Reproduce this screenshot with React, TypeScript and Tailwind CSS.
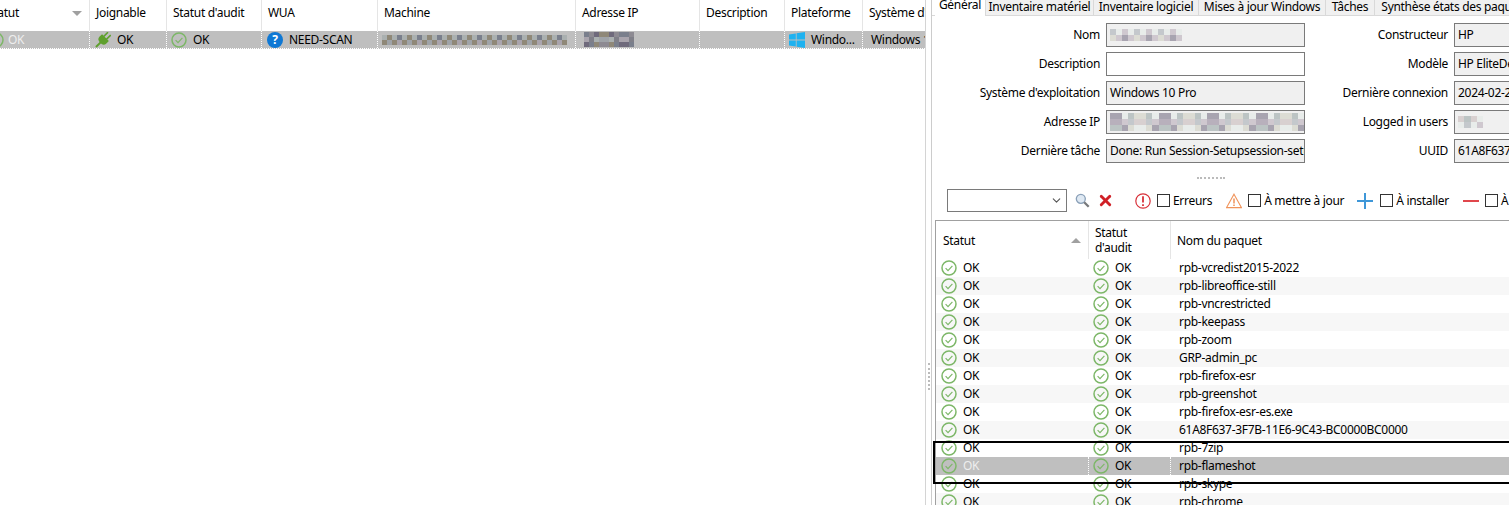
import type { ReactNode } from 'react';
import { X, ChevronDown } from 'lucide-react';

// blurred-out values, drawn as pixelated tinted blocks
const tints = ['#a9a4ad', '#8d8a92', '#aab0b0', '#7a7f8c', '#9fa3a8', '#6f6a7c', '#7f7f88', '#8f8878'];
const lightTints = ['#cfc8cf', '#dcdcd4', '#b8b0bc', '#e8ecea', '#c4c8cc', '#a8a4b0', '#d8d0d0', '#bcc4c4'];

function Blur({ width, rows = 2, cell = 5, seed = 1, light = false }: { width: number; rows?: number; cell?: number; seed?: number; light?: boolean }) {
  const n = Math.floor(width / cell);
  const colours = light ? lightTints : tints;
  return (
    <div className="flex flex-col shrink-0" style={{ width }}>
      {Array.from({ length: rows }).map((_, r) => (
        <div key={r} className="flex" style={{ height: cell }}>
          {Array.from({ length: n }).map((_, i) => (
            <div
              key={i}
              className="flex-1"
              style={{ background: colours[(i * i * 3 + i * seed + seed + r * 5) % colours.length] }}
            />
          ))}
        </div>
      ))}
    </div>
  );
}

function CheckIcon({ className = '' }: { className?: string }) {
  return (
    <svg viewBox="0 0 16 16" className={`w-4 h-4 shrink-0 ${className}`} fill="none" stroke="#7db768" strokeWidth="1.5">
      <circle cx="8" cy="8" r="7" />
      <path d="M4.6 8.2 7 10.6 11.4 5.8" strokeWidth="1.2" />
    </svg>
  );
}

function PlugIcon() {
  return (
    <svg viewBox="0 0 16 16" className="w-4 h-4 shrink-0" fill="#5fa02e">
      <g transform="rotate(45 8 8)">
        <rect x="5.2" y="-1" width="1.7" height="6" />
        <rect x="9.1" y="-1" width="1.7" height="6" />
        <path d="M3.2 4.5H12.8V8Q12.8 12 8 12Q3.2 12 3.2 8z" />
        <rect x="7" y="11" width="2" height="7" />
      </g>
    </svg>
  );
}

function HelpIcon() {
  return <div className="w-4 h-4 rounded-full bg-[#0f78d4] text-white text-[12px] font-bold leading-4 text-center shrink-0">?</div>;
}

function WinIcon() {
  return (
    <svg viewBox="0 0 16 16" className="w-4 h-4 shrink-0" fill="#1fb2f0">
      <path d="M0 2.6 6.8 1.4V7.6H0zM7.6 1.3 16 0V7.6H7.6zM0 8.4H6.8V14.6L0 13.4zM7.6 8.4H16V16L7.6 14.7z" />
    </svg>
  );
}

function ErrorIcon() {
  return (
    <svg viewBox="0 0 16 16" className="w-4 h-4 shrink-0" fill="none" stroke="#d8313a" strokeWidth="1.2">
      <circle cx="8" cy="8" r="7.2" />
      <path d="M8 3.2V9.6M8 11.2V13" strokeWidth="1.8" />
    </svg>
  );
}

function WarnIcon() {
  return (
    <svg viewBox="0 0 16 16" className="w-4 h-4 shrink-0" fill="none" stroke="#f0935a" strokeWidth="1.1">
      <path d="M8 1.2 15.4 14.6H0.6z" />
      <path d="M8 5.5V10.6M8 11.6V13" strokeWidth="1.5" />
    </svg>
  );
}

function LensIcon() {
  return (
    <svg viewBox="0 0 16 16" className="w-[15px] h-[15px] shrink-0" fill="#dfe9f3" stroke="#8aa0b8" strokeWidth="1.4">
      <circle cx="6.2" cy="6.2" r="4.8" />
      <path d="M9.8 9.8 14.6 14.6" stroke="#77797c" strokeWidth="2.4" />
    </svg>
  );
}

function PlusIcon() {
  return (
    <svg viewBox="0 0 16 16" className="w-4 h-4 shrink-0" stroke="#3f97d8" strokeWidth="2">
      <path d="M0 8H16M8 0V16" />
    </svg>
  );
}

function MinusIcon() {
  return (
    <svg viewBox="0 0 16 16" className="w-4 h-4 shrink-0" stroke="#e0474c" strokeWidth="2">
      <path d="M0 8H16" />
    </svg>
  );
}

const leftCols = [
  { label: 'Statut', w: 90 },
  { label: 'Joignable', w: 77 },
  { label: "Statut d'audit", w: 95 },
  { label: 'WUA', w: 116 },
  { label: 'Machine', w: 198 },
  { label: 'Adresse IP', w: 124 },
  { label: 'Description', w: 85 },
  { label: 'Plateforme', w: 78 },
  { label: "Système d'", w: 63 },
];

function Cell({ w, pl = 0, children }: { w: number; pl?: number; children?: ReactNode }) {
  return (
    <div
      className="flex items-center shrink-0 overflow-hidden whitespace-nowrap border-r border-dotted border-white"
      style={{ width: w, paddingLeft: pl }}
    >
      {children}
    </div>
  );
}

function LeftPane() {
  return (
    <div className="w-[926px] shrink-0 overflow-hidden border-r border-[#d4d4d4]">
      <div className="flex h-[31px]">
        {leftCols.map((c, i) => (
          <div
            key={c.label}
            className={`relative flex items-center h-full pb-[6px] border-r border-[#e5e5e5] shrink-0 overflow-hidden whitespace-nowrap ${i === 0 ? '' : 'pl-[6px]'}`}
            style={{ width: c.w }}
          >
            <span className={i === 0 ? '-ml-[13px]' : ''}>{c.label}</span>
            {i === 0 && <div className="absolute left-[72px] top-[11px] w-0 h-0 border-x-[5px] border-x-transparent border-t-[5px] border-t-[#a0a0a0]" />}
          </div>
        ))}
      </div>
      <div className="flex h-[18px] bg-[#bfbfbf] border-b border-dotted border-white">
        <Cell w={90}>
          <CheckIcon className="-ml-[12px]" />
          <span className="ml-[4px] text-[#eeeeee]">OK</span>
        </Cell>
        <Cell w={77} pl={5}>
          <PlugIcon />
          <span className="ml-[6px]">OK</span>
        </Cell>
        <Cell w={95} pl={4}>
          <CheckIcon />
          <span className="ml-[6px]">OK</span>
        </Cell>
        <Cell w={116} pl={5}>
          <HelpIcon />
          <span className="ml-[6px]">NEED-SCAN</span>
        </Cell>
        <Cell w={198} pl={4}>
          <Blur width={185} rows={2} cell={5} seed={2} />
        </Cell>
        <Cell w={124} pl={8}>
          <Blur width={50} rows={3} cell={5} seed={3} />
        </Cell>
        <Cell w={85} />
        <Cell w={78} pl={4}>
          <WinIcon />
          <span className="ml-[6px]">Windo...</span>
        </Cell>
        <Cell w={63} pl={8}>Windows 1</Cell>
      </div>
    </div>
  );
}

const tabs = [
  { label: 'Inventaire matériel', w: 108 },
  { label: 'Inventaire logiciel', w: 105 },
  { label: 'Mises à jour Windows', w: 127 },
  { label: 'Tâches', w: 49 },
  { label: 'Synthèse états des paquets', w: 160 },
];

function Tabs() {
  return (
    <div className="flex h-[16px] shrink-0 pl-[3px] border-b border-[#d9d9d9]">
      <div className="w-[51px] h-[16px] bg-white text-center leading-[9px] border-r border-[#d9d9d9] shrink-0">Général</div>
      {tabs.map((t) => (
        <div
          key={t.label}
          className="h-[15px] bg-[#f0f0f0] border-r border-[#d9d9d9] text-center leading-[13px] whitespace-nowrap shrink-0"
          style={{ width: t.w }}
        >
          {t.label}
        </div>
      ))}
    </div>
  );
}

function Field({ label, labelW, inputW, white, children }: { label: string; labelW: number; inputW: number; white?: boolean; children?: ReactNode }) {
  return (
    <div className="flex items-center h-6">
      <div className="text-right whitespace-nowrap shrink-0" style={{ width: labelW }}>{label}</div>
      <div
        className={`ml-[6px] h-6 border border-[#7a7a7a] flex items-center pl-[3px] overflow-hidden whitespace-nowrap shrink-0 ${white ? 'bg-white' : 'bg-[#f0f0f0]'}`}
        style={{ width: inputW }}
      >
        {children}
      </div>
    </div>
  );
}

function Form() {
  return (
    <div className="flex pt-[7px] shrink-0">
      <div className="flex flex-col gap-[5px] w-[374px] shrink-0">
        <Field label="Nom" labelW={168} inputW={199}>
          <Blur width={72} rows={2} cell={6} seed={4} light />
        </Field>
        <Field label="Description" labelW={168} inputW={199} white />
        <Field label="Système d'exploitation" labelW={168} inputW={199}>Windows 10 Pro</Field>
        <Field label="Adresse IP" labelW={168} inputW={199}>
          <Blur width={194} rows={3} cell={6} seed={5} light />
        </Field>
        <Field label="Dernière tâche" labelW={168} inputW={199}>Done: Run Session-Setupsession-setup</Field>
      </div>
      <div className="flex flex-col gap-[5px] shrink-0">
        <Field label="Constructeur" labelW={142} inputW={120}>HP</Field>
        <Field label="Modèle" labelW={142} inputW={120}>HP EliteDesk</Field>
        <Field label="Dernière connexion" labelW={142} inputW={120}>2024-02-21</Field>
        <Field label="Logged in users" labelW={142} inputW={120}>
          <Blur width={25} rows={2} cell={6} seed={6} light />
        </Field>
        <Field label="UUID" labelW={142} inputW={120}>61A8F637-3F7B</Field>
      </div>
    </div>
  );
}

function Check({ label }: { label: string }) {
  return (
    <div className="flex items-center gap-[3px] whitespace-nowrap shrink-0">
      <div className="w-[13px] h-[13px] bg-white border border-[#333333] shrink-0" />
      <span>{label}</span>
    </div>
  );
}

function Toolbar() {
  return (
    <div className="flex items-center h-[23px] mt-[10px] pl-[15px] shrink-0">
      <div className="w-[120px] h-[23px] border border-[#7a7a7a] flex items-center justify-end pr-[3px] shrink-0">
        <ChevronDown className="w-[13px] h-[13px] text-[#555555]" />
      </div>
      <div className="ml-[8px] shrink-0"><LensIcon /></div>
      <X className="w-[17px] h-[17px] ml-[7px] text-[#d01f26] shrink-0" strokeWidth={4} />
      <div className="ml-[21px] shrink-0"><ErrorIcon /></div>
      <div className="ml-[6px]"><Check label="Erreurs" /></div>
      <div className="ml-[14px] shrink-0"><WarnIcon /></div>
      <div className="ml-[6px]"><Check label="À mettre à jour" /></div>
      <div className="ml-[13px] shrink-0"><PlusIcon /></div>
      <div className="ml-[7px]"><Check label="À installer" /></div>
      <div className="ml-[14px] shrink-0"><MinusIcon /></div>
      <div className="ml-[6px]"><Check label="À enlever" /></div>
    </div>
  );
}

const packages = [
  'rpb-vcredist2015-2022',
  'rpb-libreoffice-still',
  'rpb-vncrestricted',
  'rpb-keepass',
  'rpb-zoom',
  'GRP-admin_pc',
  'rpb-firefox-esr',
  'rpb-greenshot',
  'rpb-firefox-esr-es.exe',
  '61A8F637-3F7B-11E6-9C43-BC0000BC0000',
  'rpb-7zip',
  'rpb-flameshot',
  'rpb-skype',
  'rpb-chrome',
];

function PackageTable() {
  return (
    <div className="relative mt-[8px] ml-[3px] flex-1 min-h-0 border-t border-l border-[#a0a0a0] overflow-hidden">
      <div className="flex h-[38px] leading-[15px]">
        <div className="relative w-[153px] flex items-center pl-[7px] border-r border-[#e5e5e5] shrink-0">
          Statut
          <div className="absolute right-[7px] top-[17px] w-0 h-0 border-x-[5px] border-x-transparent border-b-[5px] border-b-[#a0a0a0]" />
        </div>
        <div className="w-[82px] flex items-center pl-[6px] border-r border-[#e5e5e5] shrink-0">
          Statut<br />d'audit
        </div>
        <div className="flex items-center pl-[6px]">Nom du paquet</div>
      </div>
      <div className="flex flex-col">
        {packages.map((name, i) => {
          const selected = name === 'rpb-flameshot';
          return (
            <div
              key={name}
              className={`flex items-center h-[18px] shrink-0 ${selected ? 'bg-[#bfbfbf]' : i % 2 === 1 ? 'bg-[#f7f7f7]' : 'bg-white'}`}
            >
              <div className={`w-[153px] flex items-center pl-[5px] shrink-0 ${selected ? 'border-r border-dotted border-white h-full' : ''}`}>
                <CheckIcon />
                <span className={`ml-[6px] ${selected ? 'text-[#eeeeee]' : ''}`}>OK</span>
              </div>
              <div className={`w-[82px] flex items-center pl-[4px] shrink-0 ${selected ? 'border-r border-dotted border-white h-full' : ''}`}>
                <CheckIcon />
                <span className="ml-[6px]">OK</span>
              </div>
              <div className="pl-[8px] whitespace-nowrap">{name}</div>
            </div>
          );
        })}
      </div>
    </div>
  );
}

export default function App() {
  return (
    <div className="relative flex w-[1509px] h-[505px] overflow-hidden bg-white text-[12px] tracking-[-0.3px] text-black [font-family:'Noto_Sans',sans-serif]">
      <LeftPane />
      {/* splitter */}
      <div className="w-[6px] shrink-0 flex items-center justify-end pr-[1px] border-r border-[#cccccc]">
        <div className="h-[27px] mt-[248px] border-l-2 border-dotted border-[#bbbbbb]" />
      </div>
      <div className="flex flex-col min-w-0 flex-1 overflow-hidden">
        <Tabs />
        <Form />
        <div className="flex justify-center shrink-0 mt-[14px] ml-[-20px]">
          <div className="w-[28px] border-t-2 border-dotted border-[#bbbbbb]" />
        </div>
        <Toolbar />
        <PackageTable />
      </div>
      {/* black rectangle drawn over the screenshot */}
      <div className="absolute left-[933px] top-[441px] w-[590px] h-[43px] border-2 border-black pointer-events-none" />
    </div>
  );
}
